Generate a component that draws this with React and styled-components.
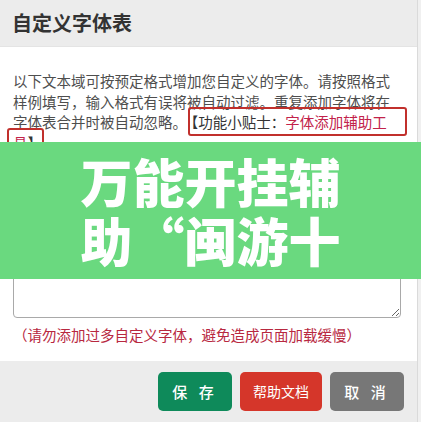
import React from "react";
import styled, { createGlobalStyle } from "styled-components";

const Global = createGlobalStyle`
  html, body { margin: 0; padding: 0; background: #f0f0f0; }
  body { font-family: "Noto Sans CJK SC", "Noto Sans", sans-serif; }
  * { box-sizing: border-box; }
`;

const Stage = styled.div`
  position: relative;
  width: 421px;
  height: 422px;
  overflow: hidden;
  background: #f0f0f0;
`;

const Dialog = styled.div`
  width: 418px;
  height: 422px;
  background: #fff;
  border-right: 1px solid #dadada;
  display: flex;
  flex-direction: column;
`;

const Header = styled.div`
  height: 47px;
  flex: none;
  background: #ececec;
  border-bottom: 1px solid #e4e4e4;
  display: flex;
  align-items: center;
  padding-left: 12px;
`;

const Title = styled.h2`
  margin: 0;
  font-size: 20px;
  font-weight: 700;
  color: #333;
  line-height: 1;
`;

const Body = styled.div`
  flex: none;
  padding: 24px 16px 15px 13px;
  background: #fff;
`;

const Intro = styled.p`
  margin: 0;
  font-size: 14.5px;
  line-height: 20.5px;
  color: #4e4e4e;
  white-space: nowrap;
`;

const TipBox = styled.span`
  border: 2px solid #c1302c;
  border-radius: 3px;
  padding: ${(p) => (p.$tail ? "2px 0 2px 4px" : "2px 18px 2px 1px")};
  margin-left: ${(p) => (p.$tail ? "-6px" : "1px")};
  color: #333;
`;

const Red = styled.span`
  color: #c2224a;
`;

const Field = styled.textarea`
  display: block;
  width: 388px;
  height: 157px;
  margin-top: 8px;
  border: 1px solid #a9a9a9;
  border-radius: 4px;
  background: #fff;
  resize: vertical;
  font-family: inherit;
`;

const Note = styled.p`
  margin: 7px 0 0;
  font-size: 14.5px;
  line-height: 20.5px;
  color: #b8283f;
`;

const Footer = styled.div`
  flex: 1;
  background: #ececec;
  display: flex;
  justify-content: flex-end;
  align-items: flex-start;
  gap: 8px;
  padding: 11px 13px 0 0;
`;

const Button = styled.button`
  height: 39px;
  min-width: 74px;
  padding: 0 13px;
  border: none;
  border-radius: 5px;
  background: ${(p) => p.$bg};
  color: #fff;
  font-family: inherit;
  font-size: ${(p) => p.$size || "15px"};
  font-weight: ${(p) => p.$weight || 500};
  letter-spacing: ${(p) => p.$spacing || "0"};
  cursor: pointer;
`;

const Banner = styled.div`
  position: absolute;
  left: 0;
  right: 0;
  top: 142px;
  height: 137px;
  background: #6ad97f;
  padding-top: 9px;
  text-align: center;
  color: #fff;
  font-size: 52px;
  font-weight: 900;
  line-height: 59px;
`;

export default function App() {
  return (
    <>
      <Global />
      <Stage>
        <Dialog>
          <Header>
            <Title>自定义字体表</Title>
          </Header>
          <Body>
            <Intro>
              以下文本域可按预定格式增加您自定义的字体。请按照格式
              <br />
              样例填写，输入格式有误将被自动过滤。重复添加字体将在
              <br />
              字体表合并时被自动忽略。
              <TipBox>
                【功能小贴士：<Red>字体添加辅助工</Red>
              </TipBox>
              <br />
              <TipBox $tail>
                <Red>具</Red>】
              </TipBox>
            </Intro>
            <Field readOnly />
            <Note>（请勿添加过多自定义字体，避免造成页面加载缓慢）</Note>
          </Body>
          <Footer>
            <Button $bg="#0e8a5a" $spacing="4px">保 存</Button>
            <Button $bg="#d5362a" $size="14px" $weight={400}>帮助文档</Button>
            <Button $bg="#777777" $spacing="4px">取 消</Button>
          </Footer>
        </Dialog>
        <Banner>
          万能开挂辅
          <br />
          助“闽游十
        </Banner>
      </Stage>
    </>
  );
}
